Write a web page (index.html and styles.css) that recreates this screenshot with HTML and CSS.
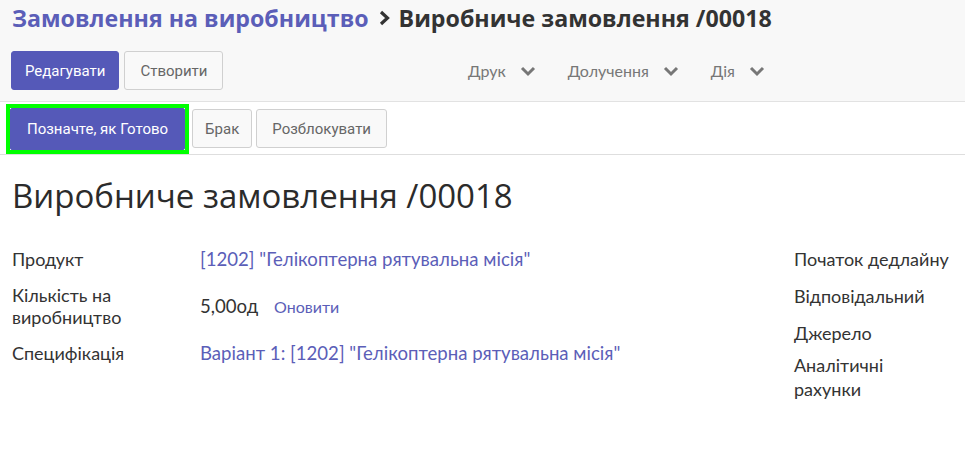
FILE: index.html
```html
<!DOCTYPE html>
<html>
<head>
<meta name="viewport" content="width=device-width, initial-scale=1">
<link rel="stylesheet" href="styles.css">
</head>
<body>
  <div class="control-panel">
    <div class="breadcrumb">
      <a href="#" class="crumb-link">Замовлення на виробництво</a>
      <svg class="crumb-sep" width="11" height="16" viewBox="0 0 11 16"><path d="M2 2 L8.5 8 L2 14" fill="none" stroke="#333" stroke-width="3.2"/></svg>
      <span class="crumb-current">Виробниче замовлення /00018</span>
    </div>
    <div class="cp-bottom">
      <div class="cp-buttons">
        <button class="btn btn-primary">Редагувати</button>
        <button class="btn btn-secondary">Створити</button>
      </div>
      <div class="cp-menus">
        <span class="dd">Друк <svg class="caret" width="16" height="12" viewBox="0 0 16 12"><path d="M2 3 L8 9 L14 3" fill="none" stroke="#777" stroke-width="3"/></svg></span>
        <span class="dd">Долучення <svg class="caret" width="16" height="12" viewBox="0 0 16 12"><path d="M2 3 L8 9 L14 3" fill="none" stroke="#777" stroke-width="3"/></svg></span>
        <span class="dd">Дія <svg class="caret" width="16" height="12" viewBox="0 0 16 12"><path d="M2 3 L8 9 L14 3" fill="none" stroke="#777" stroke-width="3"/></svg></span>
      </div>
    </div>
  </div>

  <div class="statusbar">
    <span class="highlight"><button class="btn btn-primary">Позначте, як Готово</button></span>
    <button class="btn btn-secondary btn-short">Брак</button>
    <button class="btn btn-secondary">Розблокувати</button>
  </div>

  <div class="sheet">
    <h1 class="title">Виробниче замовлення /00018</h1>
    <div class="groups">
      <div class="group group-left">
        <div class="label">Продукт</div>
        <div class="value"><a href="#">[1202] "Гелікоптерна рятувальна місія"</a></div>

        <div class="label">Кількість на виробництво</div>
        <div class="value">5,00од <a href="#" class="update">Оновити</a></div>

        <div class="label">Специфікація</div>
        <div class="value"><a href="#">Варіант 1: [1202] "Гелікоптерна рятувальна місія"</a></div>
      </div>
      <div class="group group-right">
        <div class="label nowrap">Початок дедлайну</div>
        <div class="label nowrap">Відповідальний</div>
        <div class="label nowrap">Джерело</div>
        <div class="label label-last">Аналітичні рахунки</div>
      </div>
    </div>
  </div>
</body>
</html>
```

FILE: styles.css
```css
* {
  box-sizing: border-box;
}

body {
  margin: 0;
  background-color: #fff;
  color: #333;
  font-family: Lato, "Liberation Sans", sans-serif;
  overflow: hidden;
}

a {
  color: #5b5eb8;
  text-decoration: none;
}

.control-panel {
  background-color: #f8f8f8;
  border-bottom: 1px solid #e2e2e2;
  padding: 3px 12px 0 11px;
  height: 102px;
}

.breadcrumb {
  display: flex;
  align-items: center;
  font-family: "Open Sans", sans-serif;
  font-weight: bold;
  font-size: 23.2px;
  height: 30px;
  padding-left: 1px;
}

.crumb-link {
  color: #5b5eb8;
}

.crumb-sep {
  margin: 0 9px 0 10px;
}

.crumb-current {
  color: #333;
}

.cp-bottom {
  display: flex;
  align-items: center;
  margin-top: 18px;
}

.cp-buttons {
  display: flex;
  gap: 5px;
  width: 457px;
}

.cp-menus {
  display: flex;
  gap: 32px;
  color: #777;
  font-size: 16px;
}

.dd {
  display: flex;
  align-items: center;
  gap: 14px;
}

.btn {
  font-family: Roboto, sans-serif;
  font-size: 15px;
  height: 39px;
  padding: 0 13px;
  border-radius: 3px;
  border: 1px solid #d0d0d0;
  cursor: pointer;
}

.btn-primary {
  background-color: #5559b8;
  border-color: #5559b8;
  color: #fff;
}

.btn-secondary {
  background-color: #f9f9f9;
  color: #666;
}

.cp-buttons .btn-secondary {
  padding: 0 15px;
}

.statusbar {
  display: flex;
  align-items: center;
  gap: 3px;
  padding: 1px 12px 0 6px;
  height: 53px;
  border-bottom: 1px solid #dedede;
}

.statusbar .btn {
  padding: 0 15px;
}

.statusbar .btn-short {
  padding: 0 12px;
  margin-right: 1px;
}

.highlight {
  display: flex;
  border: 4px solid #00ff00;
  height: 50px;
}

.highlight .btn {
  height: 42px;
  border-radius: 2px;
  padding: 0 16px;
}

.sheet {
  padding: 18px 0 0 12px;
}

.title {
  font-family: "Open Sans", sans-serif;
  font-weight: normal;
  font-size: 33px;
  margin: 0 0 30px;
  color: #2b2b2b;
}

.groups {
  display: grid;
  grid-template-columns: 782px 1fr;
  font-size: 18px;
  line-height: 22px;
}

.group-left {
  display: grid;
  grid-template-columns: 188px 1fr;
  row-gap: 14px;
  align-items: center;
  align-content: start;
}

.group-left .label {
  padding-right: 20px;
}

.value {
  font-size: 18.6px;
}

.update {
  font-size: 16px;
  margin-left: 11px;
}

.group-right {
  display: flex;
  flex-direction: column;
  gap: 15px;
  width: 150px;
}

.label-last {
  margin-top: -6px;
  line-height: 24px;
}

.nowrap {
  white-space: nowrap;
}
```
